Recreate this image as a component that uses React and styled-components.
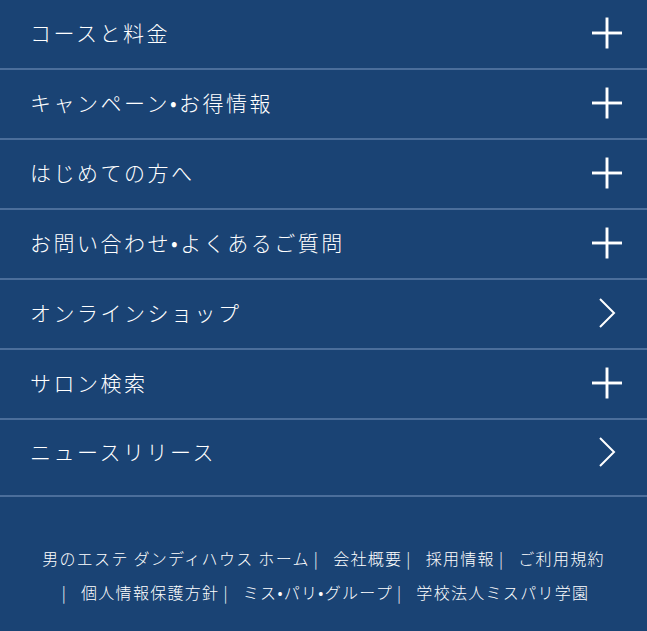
import styled, { createGlobalStyle } from "styled-components";

const GlobalStyle = createGlobalStyle`
  html, body {
    margin: 0;
    padding: 0;
    background-color: #1a4374;
  }
  * {
    box-sizing: border-box;
  }
`

const Nav = styled.nav`
  background-color: #1a4374;
  font-family: "Noto Sans CJK JP", "Noto Sans", sans-serif;
  color: #fff;
`

const MenuList = styled.ul`
  list-style: none;
  margin: 0;
  padding: 0;
`

const MenuItem = styled.li`
  height: ${(p) => (p.$last ? "77px" : "70px")};
  border-bottom: 2px solid #4b6e9b;
  display: flex;
  align-items: center;
  padding-bottom: ${(p) => (p.$last ? "11px" : "2px")};
  justify-content: space-between;
  padding-left: 30px;
  padding-right: 25px;
  cursor: pointer;
`

const Label = styled.span`
  font-size: 21px;
  letter-spacing: 2.5px;
  line-height: 1;
  font-weight: 300;
  margin-bottom: 1px;
`

const IconBox = styled.span`
  width: 30px;
  height: 32px;
  display: flex;
  align-items: center;
  justify-content: center;
`

const Footer = styled.footer`
  padding: 44px 20px 20px;
  text-align: center;
  font-size: 16px;
  line-height: 34px;
  letter-spacing: 1.3px;
  font-weight: 300;
`

const FooterLink = styled.a`
  color: #fff;
  text-decoration: none;
`

const Sep = styled.span`
  margin: 0 14px 0 4px;
`

function PlusIcon() {
  return (
    <svg width="31" height="32" viewBox="0 0 31 32">
      <rect x="0" y="14.5" width="31" height="3" fill="#fff" />
      <rect x="14" y="0" width="3" height="32" fill="#fff" />
    </svg>
  )
}

function ChevronIcon() {
  return (
    <svg width="18" height="30" viewBox="0 0 18 30">
      <polyline points="2,1 16,15 2,29" fill="none" stroke="#fff" strokeWidth="2" />
    </svg>
  )
}

const menu = [
  { label: "コースと料金", icon: "plus" },
  { label: "キャンペーン•お得情報", icon: "plus" },
  { label: "はじめての方へ", icon: "plus" },
  { label: "お問い合わせ•よくあるご質問", icon: "plus" },
  { label: "オンラインショップ", icon: "arrow" },
  { label: "サロン検索", icon: "plus" },
  { label: "ニュースリリース", icon: "arrow" },
]

const links = [
  "男のエステ ダンディハウス ホーム",
  "会社概要",
  "採用情報",
  "ご利用規約",
  "個人情報保護方針",
  "ミス•パリ•グループ",
  "学校法人ミスパリ学園",
]

export default function App() {
  return (
    <>
      <GlobalStyle />
      <Nav>
        <MenuList>
          {menu.map((m, i) => (
            <MenuItem key={m.label} $last={i === menu.length - 1}>
              <Label>{m.label}</Label>
              <IconBox>{m.icon === "plus" ? <PlusIcon /> : <ChevronIcon />}</IconBox>
            </MenuItem>
          ))}
        </MenuList>
        <Footer>
          {links.map((l, i) => (
            <span key={l}>
              <FooterLink href="#">{l}</FooterLink>
              {i < links.length - 1 && (i === 3 ? <><br /><Sep>|</Sep></> : <Sep>|</Sep>)}
            </span>
          ))}
        </Footer>
      </Nav>
    </>
  )
}
